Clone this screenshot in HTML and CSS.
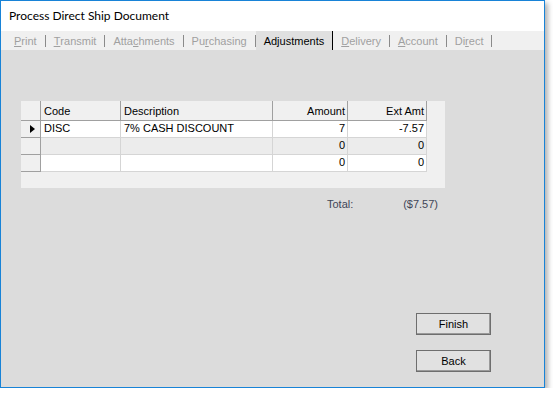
FILE: index.html
```html
<!DOCTYPE html>
<html>
<head>
<meta charset="utf-8">
<link rel="stylesheet" href="styles.css">
</head>
<body>
<div class="window">
  <div class="titlebar">Process Direct Ship Document</div>
  <div class="tabs">
    <span class="tab"><u>P</u>rint</span>
    <span class="tab"><u>T</u>ransmit</span>
    <span class="tab">Atta<u>c</u>hments</span>
    <span class="tab">Pu<u>r</u>chasing</span>
    <span class="tab active">Ad<u>j</u>ustments</span>
    <span class="tab"><u>D</u>elivery</span>
    <span class="tab"><u>A</u>ccount</span>
    <span class="tab">Di<u>r</u>ect</span>
  </div>
  <div class="content">
    <div class="datagrid">
      <div class="grow head">
        <div class="c rh"></div>
        <div class="c code">Code</div>
        <div class="c desc">Description</div>
        <div class="c amt num">Amount</div>
        <div class="c ext num">Ext Amt</div>
      </div>
      <div class="grow">
        <div class="c rh"><span class="arrow"></span></div>
        <div class="c code">DISC</div>
        <div class="c desc">7% CASH DISCOUNT</div>
        <div class="c amt num">7</div>
        <div class="c ext num">-7.57</div>
      </div>
      <div class="grow alt">
        <div class="c rh"></div>
        <div class="c code"></div>
        <div class="c desc"></div>
        <div class="c amt num">0</div>
        <div class="c ext num">0</div>
      </div>
      <div class="grow">
        <div class="c rh"></div>
        <div class="c code"></div>
        <div class="c desc"></div>
        <div class="c amt num">0</div>
        <div class="c ext num">0</div>
      </div>
    </div>
    <div class="totals">
      <span class="tlabel">Total:</span>
      <span class="tvalue">($7.57)</span>
    </div>
    <div class="buttons">
      <button class="btn">Finish</button>
      <button class="btn">Back</button>
    </div>
  </div>
</div>
</body>
</html>
```
FILE: styles.css
```css
html, body {
  margin: 0;
  padding: 0;
  background: #ffffff;
}
body {
  font-family: "Liberation Sans", Arial, sans-serif;
  font-size: 11px;
  color: #000;
}
.window {
  width: 545px;
  height: 388px;
  box-sizing: border-box;
  border: 1px solid #1883d7;
  display: flex;
  flex-direction: column;
  box-shadow: 3px 3px 5px rgba(0,0,0,0.3);
}
.titlebar {
  height: 30px;
  background: #fff;
  font-family: Lato, "Noto Sans", sans-serif;
  font-size: 12px;
  line-height: 30px;
  padding-left: 8px;
  color: #000;
}
.tabs {
  height: 19px;
  background: #f0f0f0;
  display: flex;
  align-items: stretch;
  padding-left: 5px;
}
.tab {
  display: flex;
  align-items: center;
  position: relative;
  padding: 1px 8px 0 8px;
  margin-right: 1px;
  color: #a0a0a0;
}
.tab::after {
  content: "";
  position: absolute;
  right: -1px;
  top: 4px;
  width: 1px;
  height: 12px;
  background: #8a8a8a;
}
.tab.active {
  background: #e0e0e0;
  color: #000;
}
.tab.active::after {
  top: 0;
  height: 19px;
  background: #000;
}
.content {
  flex: 1;
  background: #dcdcdc;
  padding: 51px 0 0 20px;
}
.datagrid {
  width: 424px;
  height: 87px;
  background: #f0f0f0;
}
.grow {
  display: flex;
  height: 17px;
}
.grow.head {
  height: 20px;
}
.c {
  box-sizing: border-box;
  height: 100%;
  background: #fff;
  border-right: 1px solid #d5d5d5;
  border-bottom: 1px solid #d5d5d5;
  padding: 0 3px;
  line-height: 15px;
  white-space: nowrap;
}
.grow.alt .c { background: #ececec; }
.head .c {
  background: #f0f0f0;
  border-right: 1px solid #a0a0a0;
  border-bottom: 1px solid #a0a0a0;
  line-height: 20px;
}
.c.rh {
  width: 20px;
  background: #f0f0f0;
  border-right: 1px solid #a0a0a0;
  border-bottom: 1px solid #a0a0a0;
  position: relative;
}
.grow.alt .c.rh { background: #f0f0f0; }
.code { width: 80px; }
.desc { width: 152px; }
.amt { width: 75px; }
.ext { width: 79px; }
.num { text-align: right; padding-right: 2px; }
.arrow {
  position: absolute;
  left: 9px;
  top: 4px;
  width: 0;
  height: 0;
  border-top: 4px solid transparent;
  border-bottom: 4px solid transparent;
  border-left: 5px solid #000;
}
.totals {
  margin: 9px 0 0 306px;
  width: 111px;
  height: 14px;
  display: flex;
  justify-content: space-between;
  align-items: center;
  color: #3f4658;
}
.buttons {
  margin-top: 102px;
  display: flex;
  flex-direction: column;
  align-items: flex-end;
  padding-right: 53px;
  gap: 15px;
}
.btn {
  width: 75px;
  height: 22px;
  box-sizing: border-box;
  background: #e1e1e1;
  border: 1px solid #6e6e6e;
  box-shadow: inset -1px -1px 0 #9a9a9a;
  font-family: "Liberation Sans", Arial, sans-serif;
  font-size: 11px;
  color: #000;
  padding: 0;
  margin: 0;
}
```
